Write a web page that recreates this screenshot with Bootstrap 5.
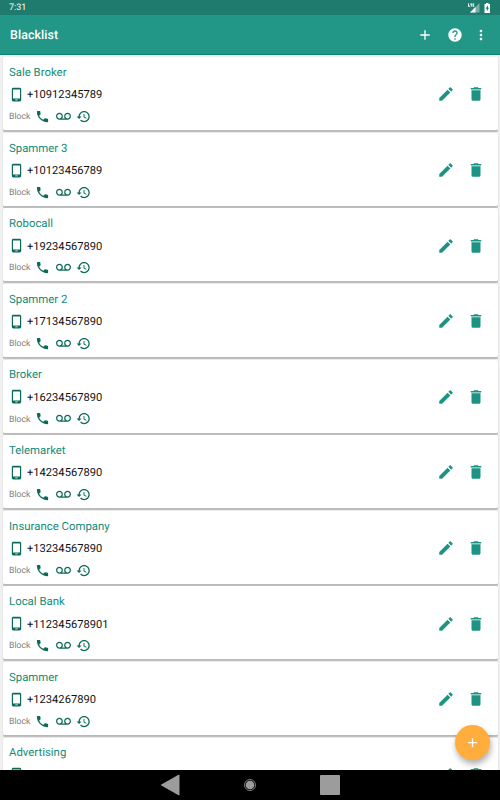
<!DOCTYPE html>
<html lang="en">
<head>
<meta charset="utf-8">
<meta name="viewport" content="width=device-width, initial-scale=1">
<title>Blacklist</title>
<link href="https://cdn.jsdelivr.net/npm/bootstrap@5.3.0/dist/css/bootstrap.min.css" rel="stylesheet">
<style>
body{font-family:Roboto,"Liberation Sans",sans-serif;background:#f0f0f0;text-rendering:geometricPrecision}
svg{display:block;flex:none;fill:currentColor}
.screen{width:500px;height:800px}
.status-bar{height:15px;background:#1e7b6e;font-size:9px;line-height:11px;padding:1px 9px 0}
.app-bar{height:40px;background:#229787;border-bottom:1px solid #078672;padding:0 11px 0 10px;flex:none}
.app-title{font-size:12.4px;font-weight:500;line-height:16px;padding-top:2px;letter-spacing:.08px}
.entries{padding:2.2px 2.5px 0;gap:2.6px}
.entry{height:73px;flex:none;border-radius:1.5px;padding:3.6px 12.5px 0 6.5px;box-shadow:0 1.5px 1px rgba(0,0,0,.22),0 0 1px rgba(0,0,0,.12)}
.line{height:22.5px}
.entry-name{font-size:11.4px;color:#148c79;padding-top:1.2px}
.entry-number{font-size:11.15px;color:#111;padding-top:2.6px;margin-left:3px}
.entry-block{font-size:8.7px;color:#808080;width:26.4px;padding-top:1.5px}
.kinds{gap:5.3px;padding-bottom:1px}
.deep{color:#0b6b58}
.teal{color:#1d9483;padding-bottom:2px;gap:12px}
.fab{right:10px;bottom:10.5px;width:35px;height:35px;background:#ffad3d;box-shadow:1px 4px 6px rgba(0,0,0,.32)}
.nav-keys{height:30px;background:#000;color:#9c9c9c;flex:none}
</style>
<script src="https://cdn.jsdelivr.net/npm/bootstrap@5.3.0/dist/js/bootstrap.bundle.min.js"></script>
</head>
<body>
<svg class="d-none">
<symbol id="i-phone" viewBox="0 0 24 24"><path fill-rule="evenodd" d="M17 1H7C5.600 1 4.500 2 4.500 3.300v17.400C4.500 22 5.600 23 7 23h10c1.400 0 2.500-1 2.500-2.300V3.300C19.500 2 18.400 1 17 1zM14 21.300h-4v-1.200h4v1.200zM17.600 18.500H6.400V4h11.200v14.500z"/></symbol>
<symbol id="i-call" viewBox="0 0 24 24"><path d="M6.620 10.790c1.440 2.830 3.760 5.140 6.590 6.590l2.200-2.200c.27-.27.67-.36 1.020-.24 1.120.37 2.330.57 3.570.57.55 0 1 .45 1 1V20c0 .55-.45 1-1 1-9.390 0-17-7.610-17-17 0-.55.45-1 1-1h3.500c.55 0 1 .45 1 1 0 1.250.2 2.450.57 3.570.11.35.03.74-.25 1.020l-2.200 2.200z"/></symbol>
<symbol id="i-mail" viewBox="0 0 24 24"><path d="M18.500 6C15.460 6 13 8.460 13 11.500c0 1.330.47 2.550 1.260 3.500H9.740c.79-.95 1.260-2.170 1.260-3.500C11 8.460 8.540 6 5.500 6S0 8.460 0 11.500 2.460 17 5.500 17h13c3.040 0 5.500-2.460 5.500-5.500S21.540 6 18.500 6zm-13 9C3.570 15 2 13.430 2 11.500S3.570 8 5.500 8 9 9.570 9 11.500 7.430 15 5.500 15zm13 0c-1.930 0-3.500-1.570-3.500-3.500S16.570 8 18.500 8 22 9.570 22 11.500 20.430 15 18.500 15z"/></symbol>
<symbol id="i-history" viewBox="0 0 24 24"><path d="M13 3c-4.970 0-9 4.030-9 9H1l3.890 3.890.07.14L9 12H6c0-3.870 3.130-7 7-7s7 3.130 7 7-3.130 7-7 7c-1.930 0-3.680-.79-4.940-2.060l-1.420 1.420C8.270 19.990 10.510 21 13 21c4.970 0 9-4.030 9-9s-4.030-9-9-9zm-1 5v5l4.280 2.540.72-1.210-3.500-2.080V8H12z"/></symbol>
<symbol id="i-edit" viewBox="0 0 24 24"><path d="M3 17.250V21h3.750L17.810 9.940l-3.750-3.750L3 17.250zM20.710 7.040c.39-.39.39-1.020 0-1.410l-2.340-2.340c-.39-.39-1.020-.39-1.410 0l-1.830 1.830 3.750 3.750 1.830-1.830z"/></symbol>
<symbol id="i-delete" viewBox="0 0 24 24"><path d="M6 19c0 1.100.9 2 2 2h8c1.100 0 2-.9 2-2V7H6v12zM19 4h-3.500l-1-1h-5l-1 1H5v2h14V4z"/></symbol>
<symbol id="i-add" viewBox="0 0 24 24"><path d="M19 13h-6v6h-2v-6H5v-2h6V5h2v6h6v2z"/></symbol>
</svg>
<div class="screen d-flex flex-column overflow-hidden">
  <header class="status-bar d-flex align-items-center text-white flex-shrink-0">
    <span class="me-auto">7:31</span>
    <svg width="12" height="10" viewBox="0 0 12 10"><path d="M11.500 0v9.500H2z" opacity=".4"/><path d="M7.500 4v5.500H2z"/><path d="M0 .5h1v2.300h1v.9H0zM2.200.5h2v.9h-.5v2.300h-.9V1.400h-.6zM4.600.5h1.700v.8h-.8v.5h.7v.7h-.7v.4h.8v.8H4.600z"/></svg>
    <svg class="ms-1" width="7" height="10" viewBox="0 0 7 10"><path fill-rule="evenodd" d="M2 0h2.500v1H6v9H.5V1H2zM4 2.200 1.600 5.700h1.300v2.500L5 4.800H4z"/></svg>
  </header>
  <nav class="app-bar d-flex align-items-center text-white">
    <h1 class="app-title mb-0 me-auto">Blacklist</h1>
    <svg width="16" height="16"><use href="#i-add"/></svg>
    <svg width="16" height="16" viewBox="0 0 24 24" style="margin-left:14px"><path d="M12 2C6.480 2 2 6.480 2 12s4.480 10 10 10 10-4.480 10-10S17.520 2 12 2zm1 17h-2v-2h2v2zm2.070-7.750l-.9.92C13.450 12.900 13 13.500 13 15h-2v-.5c0-1.100.45-2.100 1.170-2.830l1.240-1.260c.37-.36.59-.86.59-1.410 0-1.100-.9-2-2-2s-2 .9-2 2H8c0-2.210 1.790-4 4-4s4 1.790 4 4c0 .88-.36 1.680-.93 2.250z"/></svg>
    <svg width="16" height="16" viewBox="0 0 24 24" style="margin-left:10px"><path d="M12 8c1.100 0 2-.9 2-2s-.9-2-2-2-2 .9-2 2 .9 2 2 2zm0 2c-1.100 0-2 .9-2 2s.9 2 2 2 2-.9 2-2-.9-2-2-2zm0 6c-1.100 0-2 .9-2 2s.9 2 2 2 2-.9 2-2-.9-2-2-2z"/></svg>
  </nav>
  <main class="position-relative flex-grow-1 overflow-hidden">
    <div id="entries" class="entries d-flex flex-column"></div>
    <button class="fab btn position-absolute rounded-circle border-0 p-0 d-flex align-items-center justify-content-center text-white" aria-label="Add"><svg width="15" height="15"><use href="#i-add"/></svg></button>
  </main>
  <footer class="nav-keys d-flex align-items-center justify-content-center">
    <svg width="180" height="22" viewBox="0 0 180 22"><path d="M.5 11 18.500.8q1-.5 1 .5v19.400q0 1-1 .5z"/><circle cx="90" cy="11" r="4.300"/><circle cx="90" cy="11" r="5.500" fill="none" stroke="currentColor" stroke-width=".8"/><rect x="160" y="1" width="20" height="20" rx="1"/></svg>
  </footer>
</div>
<script>
const icon = (id, size) => `<svg width="${size}" height="${size}"><use href="#i-${id}"/></svg>`;
const entries = [
  ["Sale Broker", "+10912345789"], ["Spammer 3", "+10123456789"], ["Robocall", "+19234567890"],
  ["Spammer 2", "+17134567890"], ["Broker", "+16234567890"], ["Telemarket", "+14234567890"],
  ["Insurance Company", "+13234567890"], ["Local Bank", "+112345678901"], ["Spammer", "+1234267890"],
  ["Advertising", ""]
];
// The last entry is only partly scrolled into view, so its block line is left out.
document.getElementById("entries").innerHTML = entries.map(([name, number]) => `
  <article class="entry bg-white d-flex">
    <div class="me-auto">
      <div class="line entry-name d-flex align-items-center">${name}</div>
      <div class="line d-flex align-items-center deep">${icon("phone", 15)}<span class="entry-number">${number}</span></div>
      ${number && `<div class="line d-flex align-items-center"><span class="entry-block">Block</span><span class="kinds d-flex deep">${icon("call", 15)}${icon("mail", 15)}${icon("history", 15)}</span></div>`}
    </div>
    <div class="d-flex align-items-center teal">${icon("edit", 18)}${icon("delete", 18)}</div>
  </article>`).join("");
</script>
</body>
</html>
